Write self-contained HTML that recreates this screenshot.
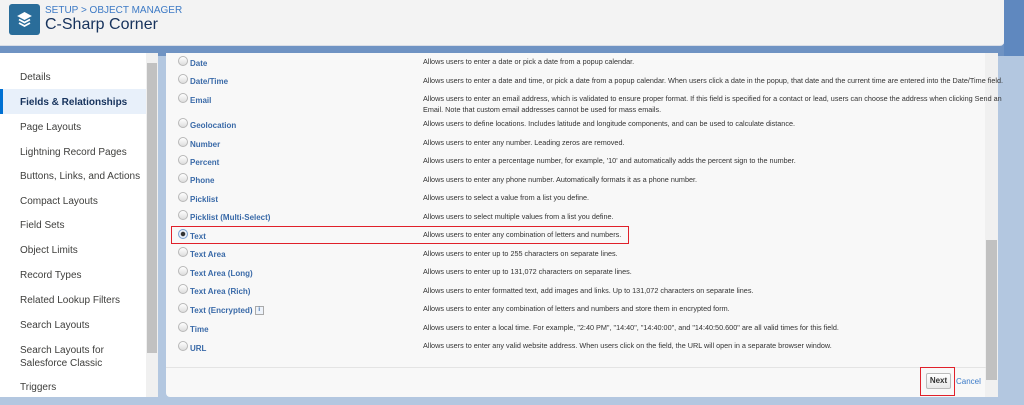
<!DOCTYPE html>
<html><head><style>
*{margin:0;padding:0;box-sizing:border-box}
body{width:1024px;height:405px;overflow:hidden;background:#b3c7e0;font-family:"Liberation Sans",sans-serif;position:relative}
.band{position:absolute;left:0;top:44px;width:1024px;height:12px;background:#6f93c3}
.rblue{position:absolute;left:1004px;top:0;width:20px;height:56px;background:#5f88bf}
.hdr{position:absolute;left:0;top:0;width:1004px;height:46px;background:#f3f3f3;border-bottom:1px solid #d8dde6;border-radius:0 0 4px 0}
.logo{position:absolute;left:9px;top:4px;width:31px;height:31px;background:#2a6d9a;border-radius:3px}
.crumb{position:absolute;left:45px;top:5px;font-size:10px;color:#3d7ac5}
.title{position:absolute;left:45px;top:16px;font-size:16px;color:#16325c}
.side{position:absolute;left:0;top:53px;width:146px;height:344px;background:#fff}
.sb{position:absolute;left:146px;top:53px;width:12px;height:344px;background:#f0f0f0}
.sb .th{position:absolute;left:1px;top:10px;width:10px;height:290px;background:#c1c1c1}
.si{position:absolute;left:20px;font-size:10px;color:#3e3e3c}
.act{position:absolute;left:0;top:89px;width:146px;height:25px;background:#e8f0fa;border-left:3px solid #0070d2}
.main{position:absolute;left:166px;top:53px;width:832px;height:344px;background:#f8f8f8;border-radius:0 0 4px 4px}
.msb{position:absolute;left:985px;top:53px;width:13px;height:344px;background:#f0f0f0}
.msb .th{position:absolute;left:1px;top:187px;width:11px;height:140px;background:#c1c1c1}
.rd{position:absolute;left:178px;width:10px;height:10px;border-radius:50%;border:1px solid #b8b8b8;background:linear-gradient(#fff,#ddd)}
.lb{position:absolute;left:190px;font-size:8px;font-weight:bold;color:#3a6aa8}
.ds{position:absolute;left:423px;font-size:7.25px;color:#333;line-height:11px;width:585px}
.foot{position:absolute;left:166px;top:367px;width:820px;height:1px;background:#e4e4e4}
</style></head><body>
<div class="band"></div><div class="rblue"></div>
<div class="hdr"><div class="logo"><svg width="31" height="31" viewBox="0 0 31 31"><g fill="none" stroke="#fff" stroke-width="1.8"><path d="M10 12 L15.5 9 L21 12 L15.5 15 Z" fill="#fff"/><path d="M10 15.5 L15.5 18.5 L21 15.5"/><path d="M10 19 L15.5 22 L21 19"/></g></svg></div>
<div class="crumb">SETUP &gt; OBJECT MANAGER</div><div class="title">C-Sharp Corner</div></div>
<div class="side"></div><div class="act"></div>
<div class="sb"><div class="th"></div></div>
<div class="si" style="top:72px">Details</div>
<div class="si" style="top:97px;font-weight:bold;color:#16325c">Fields &amp; Relationships</div>
<div class="si" style="top:122px">Page Layouts</div>
<div class="si" style="top:147px">Lightning Record Pages</div>
<div class="si" style="top:171px">Buttons, Links, and Actions</div>
<div class="si" style="top:196px">Compact Layouts</div>
<div class="si" style="top:220px">Field Sets</div>
<div class="si" style="top:245px">Object Limits</div>
<div class="si" style="top:270px">Record Types</div>
<div class="si" style="top:295px">Related Lookup Filters</div>
<div class="si" style="top:320px">Search Layouts</div>
<div class="si" style="top:344px;line-height:13px">Search Layouts for<br>Salesforce Classic</div>
<div class="si" style="top:382px">Triggers</div>
<div class="main"></div>
<div class="msb"><div class="th"></div></div>
<div class="rd" style="top:56px"></div><div class="lb" style="top:59px">Date</div><div class="ds" style="top:56px">Allows users to enter a date or pick a date from a popup calendar.</div>
<div class="rd" style="top:74px"></div><div class="lb" style="top:77px">Date/Time</div><div class="ds" style="top:75px">Allows users to enter a date and time, or pick a date from a popup calendar. When users click a date in the popup, that date and the current time are entered into the Date/Time field.</div>
<div class="rd" style="top:93px"></div><div class="lb" style="top:96px">Email</div><div class="ds" style="top:93px">Allows users to enter an email address, which is validated to ensure proper format. If this field is specified for a contact or lead, users can choose the address when clicking Send an Email. Note that custom email addresses cannot be used for mass emails.</div>
<div class="rd" style="top:118px"></div><div class="lb" style="top:121px">Geolocation</div><div class="ds" style="top:118px">Allows users to define locations. Includes latitude and longitude components, and can be used to calculate distance.</div>
<div class="rd" style="top:137px"></div><div class="lb" style="top:140px">Number</div><div class="ds" style="top:137px">Allows users to enter any number. Leading zeros are removed.</div>
<div class="rd" style="top:155px"></div><div class="lb" style="top:158px">Percent</div><div class="ds" style="top:155px">Allows users to enter a percentage number, for example, '10' and automatically adds the percent sign to the number.</div>
<div class="rd" style="top:173px"></div><div class="lb" style="top:176px">Phone</div><div class="ds" style="top:174px">Allows users to enter any phone number. Automatically formats it as a phone number.</div>
<div class="rd" style="top:192px"></div><div class="lb" style="top:195px">Picklist</div><div class="ds" style="top:192px">Allows users to select a value from a list you define.</div>
<div class="rd" style="top:210px"></div><div class="lb" style="top:213px">Picklist (Multi-Select)</div><div class="ds" style="top:211px">Allows users to select multiple values from a list you define.</div>
<div class="rd" style="top:229px;border-color:#7aa0d0;background:radial-gradient(circle,#333 0 2px,#e8eef8 2.5px)"></div><div class="lb" style="top:232px">Text</div><div class="ds" style="top:229px">Allows users to enter any combination of letters and numbers.</div>
<div style="position:absolute;left:171px;top:226px;width:458px;height:18px;border:1.5px solid #e0202a"></div>
<div class="rd" style="top:247px"></div><div class="lb" style="top:250px">Text Area</div><div class="ds" style="top:248px">Allows users to enter up to 255 characters on separate lines.</div>
<div class="rd" style="top:266px"></div><div class="lb" style="top:269px">Text Area (Long)</div><div class="ds" style="top:266px">Allows users to enter up to 131,072 characters on separate lines.</div>
<div class="rd" style="top:284px"></div><div class="lb" style="top:287px">Text Area (Rich)</div><div class="ds" style="top:285px">Allows users to enter formatted text, add images and links. Up to 131,072 characters on separate lines.</div>
<div class="rd" style="top:303px"></div><div class="lb" style="top:306px">Text (Encrypted) <span style="display:inline-block;width:9px;height:9px;border:1px solid #aaa;background:#eef3fa;color:#3a6aa8;font-size:6px;text-align:center;line-height:7px;vertical-align:top">i</span></div><div class="ds" style="top:303px">Allows users to enter any combination of letters and numbers and store them in encrypted form.</div>
<div class="rd" style="top:322px"></div><div class="lb" style="top:325px">Time</div><div class="ds" style="top:322px">Allows users to enter a local time. For example, "2:40 PM", "14:40", "14:40:00", and "14:40:50.600" are all valid times for this field.</div>
<div class="rd" style="top:341px"></div><div class="lb" style="top:344px">URL</div><div class="ds" style="top:340px">Allows users to enter any valid website address. When users click on the field, the URL will open in a separate browser window.</div>
<div class="foot"></div>
<div style="position:absolute;left:926px;top:373px;width:25px;height:16px;border:1px solid #bbb;border-radius:2px;background:linear-gradient(#fff,#e8e8e8);font-size:8px;font-weight:bold;color:#333;text-align:center;line-height:14px">Next</div>
<div style="position:absolute;left:920px;top:367px;width:35px;height:29px;border:1.5px solid #e0202a"></div>
<div style="position:absolute;left:956px;top:377px;font-size:8px;color:#3a7ac8">Cancel</div>
</body></html>
